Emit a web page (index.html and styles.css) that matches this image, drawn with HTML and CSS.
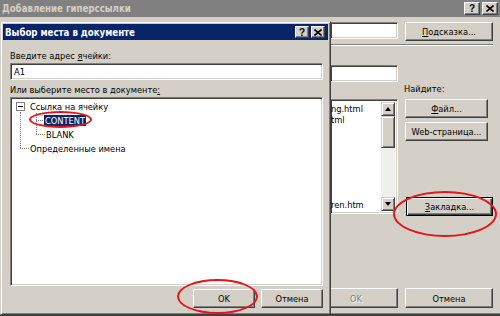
FILE: index.html
```html
<!doctype html>
<html>
    <head>
        <meta charset="utf-8">
        <title>Выбор места в документе</title>
        <link rel="stylesheet" href="styles.css">
    </head>
    <body>
        <div id="desktop">
            <!-- background window: Добавление гиперссылки -->
            <div class="back-window">
                <div class="titlebar inactive">
                    <span class="title">Добавление гиперссылки</span>
                    <span class="caption-buttons">
                        <span class="cap">?</span>
                        <span class="cap"><svg width="8" height="7" viewBox="0 0 8 7"><path d="M0.5 0.5 L7.5 6.5 M7.5 0.5 L0.5 6.5" stroke="#000" stroke-width="1.6"/></svg></span>
                    </span>
                </div>
                <div class="back-body">
                    <div class="row">
                        <div class="col-a"><div class="field"></div></div>
                        <div class="col-b"><div class="btn"><u>П</u>одсказка...</div></div>
                    </div>
                    <div class="separator"></div>
                    <div class="row grow">
                        <div class="col-a">
                            <div class="field second"></div>
                            <div class="listbox">
                                <div class="list-items">
                                    <div>ng.html</div>
                                    <div>tml</div>
                                    <div class="last">ren.htm</div>
                                </div>
                                <div class="scrollbar">
                                    <div class="sb-btn"><span class="arrow up"></span></div>
                                    <div class="sb-thumb"></div>
                                    <div class="sb-track"></div>
                                    <div class="sb-btn"><span class="arrow down"></span></div>
                                </div>
                            </div>
                        </div>
                        <div class="col-b">
                            <div class="find-label">Найдите:</div>
                            <div class="btn narrow file-btn"><u>Ф</u>айл...</div>
                            <div class="btn narrow web-btn">Web-страница...</div>
                            <div class="btn default bookmark-btn"><u>З</u>акладка...</div>
                        </div>
                    </div>
                    <div class="row bottom-row">
                        <div class="col-a"><div class="btn disabled back-ok">OK</div></div>
                        <div class="col-b"><div class="btn">Отмена</div></div>
                    </div>
                </div>
            </div>

            <!-- dialog: Выбор места в документе -->
            <div class="dialog">
                <div class="titlebar active">
                    <span class="title">Выбор места в документе</span>
                    <span class="caption-buttons small">
                        <span class="cap">?</span>
                        <span class="cap"><svg width="8" height="7" viewBox="0 0 8 7"><path d="M0.5 0.5 L7.5 6.5 M7.5 0.5 L0.5 6.5" stroke="#000" stroke-width="1.6"/></svg></span>
                    </span>
                </div>
                <div class="dialog-body">
                    <div class="label">Введите адрес <u>я</u>чейки:</div>
                    <div class="field address">A1</div>
                    <div class="label second">Или выберите место в документе<u>:</u></div>
                    <div class="tree">
                        <div class="tree-row">
                            <span class="cell root"><span class="expander"></span></span>
                            <span class="node">Ссылка на ячейку</span>
                        </div>
                        <div class="tree-row">
                            <span class="cell pipe"></span>
                            <span class="cell tee"></span>
                            <span class="node selected">CONTENT</span>
                        </div>
                        <div class="tree-row">
                            <span class="cell pipe"></span>
                            <span class="cell elbow"></span>
                            <span class="node">BLANK</span>
                        </div>
                        <div class="tree-row">
                            <span class="cell elbow"></span>
                            <span class="node">Определенные имена</span>
                        </div>
                    </div>
                    <div class="dialog-buttons">
                        <div class="btn">OK</div>
                        <div class="btn">Отмена</div>
                    </div>
                </div>
            </div>

            <!-- red marks drawn over the screenshot -->
            <div class="mark mark-content"></div>
            <div class="mark mark-bookmark"></div>
            <div class="mark mark-ok"></div>
        </div>
    </body>
</html>
```

FILE: styles.css
```css
html, body {
    margin: 0;
    padding: 0;
}
body {
    font-family: "DejaVu Sans Condensed", "DejaVu Sans", sans-serif;
    font-size: 9.2px;
    color: #000;
    background: #d4d0c8;
    --dv: repeating-linear-gradient(to bottom, #808080 0 1px, transparent 1px 2px);
    --dh: repeating-linear-gradient(to right, #808080 0 1px, transparent 1px 2px);
}
#desktop {
    position: relative;
    width: 500px;
    height: 316px;
    overflow: hidden;
}
u {
    text-decoration: underline;
    text-underline-offset: 1px;
}

/* title bars */
.titlebar {
    display: flex;
    align-items: center;
    justify-content: space-between;
    font-size: 9.6px;
    font-weight: bold;
    white-space: nowrap;
}
.titlebar.inactive {
    height: 17px;
    background: #808080;
    color: #d4d0c8;
    padding: 0 2px 0 2px;
}
.titlebar.active {
    height: 16px;
    background: #0a246a;
    color: #fff;
    padding: 0 3px 0 2px;
}
.caption-buttons {
    display: flex;
    gap: 2px;
}
.cap {
    width: 14px;
    height: 12px;
    box-sizing: border-box;
    display: flex;
    align-items: center;
    justify-content: center;
    background: #d4d0c8;
    color: #000;
    font-family: "Liberation Sans", Arial, sans-serif;
    font-size: 10px;
    font-weight: bold;
    border: 1px solid;
    border-color: #fff #404040 #404040 #fff;
    box-shadow: inset -1px -1px #808080;
}
.inactive .cap {
    width: 16px;
    height: 13px;
}

/* buttons and fields */
.btn {
    box-sizing: border-box;
    height: 19px;
    display: flex;
    align-items: center;
    justify-content: center;
    background: #d4d0c8;
    border: 1px solid;
    border-color: #fff #404040 #404040 #fff;
    box-shadow: inset -1px -1px #808080;
    white-space: nowrap;
}
.btn.default {
    border: 1px solid #000;
    box-shadow: inset 1px 1px #fff, inset -1px -1px #404040, inset -2px -2px #808080;
}
.btn.disabled {
    color: #808080;
    text-shadow: 1px 1px #fff;
}
.field {
    box-sizing: border-box;
    height: 17px;
    background: #fff;
    border: 1px solid;
    border-color: #808080 #fff #fff #808080;
    box-shadow: inset 1px 1px #404040, inset -1px -1px #d4d0c8;
}

/* background window */
.back-window {
    box-sizing: border-box;
    width: 500px;
    height: 316px;
    display: flex;
    flex-direction: column;
    border-bottom: 2px solid #404040;
    box-shadow: inset 0 -1px #808080;
}
.back-body {
    flex: 1;
    display: flex;
    flex-direction: column;
    padding: 5px 7px 6px 330px;
}
.row {
    display: flex;
    gap: 7px;
}
.row.grow {
    flex: 1;
}
.col-a {
    width: 68px;
    display: flex;
    flex-direction: column;
}
.col-b {
    width: 88px;
    display: flex;
    flex-direction: column;
}
.separator {
    margin-top: 3px;
    border-top: 1px solid #808080;
    border-bottom: 1px solid #fff;
}
.field.second {
    margin-top: 19px;
}
.listbox {
    box-sizing: border-box;
    margin-top: 17px;
    height: 115px;
    display: flex;
    background: #fff;
    border: 1px solid;
    border-color: #808080 #fff #fff #808080;
    box-shadow: inset 1px 1px #404040, inset -1px -1px #d4d0c8;
    padding: 2px 2px 2px 0;
}
.list-items {
    flex: 1;
    display: flex;
    flex-direction: column;
    line-height: 11px;
    overflow: hidden;
    padding: 1px 0 0 0;
}
.list-items .last {
    margin-top: auto;
    margin-bottom: 1px;
}
.scrollbar {
    width: 14px;
    display: flex;
    flex-direction: column;
}
.sb-btn, .sb-thumb {
    box-sizing: border-box;
    background: #d4d0c8;
    border: 1px solid;
    border-color: #d4d0c8 #404040 #404040 #d4d0c8;
    box-shadow: inset 1px 1px #fff, inset -1px -1px #808080;
}
.sb-btn {
    height: 14px;
    display: flex;
    align-items: center;
    justify-content: center;
}
.sb-thumb {
    height: 32px;
}
.sb-track {
    flex: 1;
    background: #f0efeb;
}
.arrow {
    width: 0;
    height: 0;
    border-left: 3px solid transparent;
    border-right: 3px solid transparent;
}
.arrow.up {
    border-bottom: 4px solid #000;
}
.arrow.down {
    border-top: 4px solid #000;
}
.find-label {
    margin-top: 36px;
    line-height: 13px;
    margin-left: -1px;
}
.btn.narrow {
    width: 83px;
}
.file-btn {
    margin-top: 4px;
}
.web-btn {
    margin-top: 4px;
}
.bookmark-btn {
    margin-top: 56px;
    margin-left: 1px;
    width: 87px;
}
.bottom-row .btn {
    height: 20px;
}
.back-ok {
    margin-left: -16px;
    width: 84px;
}

/* dialog */
.dialog {
    position: absolute;
    left: 0;
    top: 21px;
    width: 331px;
    height: 294px;
    box-sizing: border-box;
    display: flex;
    flex-direction: column;
    background: #d4d0c8;
    border: 1px solid;
    border-color: #d4d0c8 #404040 #404040 #d4d0c8;
    box-shadow: inset 1px 1px #fff, inset -1px -1px #808080;
    padding: 2px;
}
.dialog-body {
    flex: 1;
    display: flex;
    flex-direction: column;
    padding: 9px 5px 4px 7px;
}
.label {
    line-height: 13px;
}
.label.second {
    margin-top: 3px;
}
.field.address {
    margin-top: 1px;
    padding-left: 3px;
    line-height: 15px;
}
.tree {
    flex: 1;
    margin-top: 1px;
    box-sizing: border-box;
    background: #fff;
    border: 1px solid;
    border-color: #808080 #fff #fff #808080;
    box-shadow: inset 1px 1px #404040, inset -1px -1px #d4d0c8;
    padding: 1px 2px;
}
.tree-row {
    display: flex;
    align-items: center;
    height: 14px;
    white-space: nowrap;
}
.cell {
    flex: none;
    width: 16px;
    height: 14px;
}
.cell.root {
    display: flex;
    align-items: center;
    background: var(--dv) 7px 11px / 1px 3px no-repeat;
}
.expander {
    box-sizing: border-box;
    width: 9px;
    height: 9px;
    margin-left: 3px;
    background: #fff linear-gradient(#000, #000) center / 5px 1px no-repeat;
    border: 1px solid #808080;
}
.cell.pipe {
    background: var(--dv) 7px 0 / 1px 14px no-repeat;
}
.cell.tee {
    background: var(--dv) 7px 0 / 1px 14px no-repeat, var(--dh) 7px 7px / 9px 1px no-repeat;
}
.cell.elbow {
    background: var(--dv) 7px 0 / 1px 8px no-repeat, var(--dh) 7px 7px / 9px 1px no-repeat;
}
.node {
    line-height: 11px;
    padding: 0 1px;
}
.node.selected {
    margin-left: -1px;
    padding: 0 1px;
    background: #0a246a;
    color: #fff;
}
.dialog-buttons {
    display: flex;
    justify-content: flex-end;
    gap: 6px;
    margin-top: 3px;
}
.dialog-buttons .btn {
    width: 62px;
}

/* red ellipses */
.mark {
    position: absolute;
    box-sizing: border-box;
    border: 2px solid #e3161d;
    border-radius: 50%;
}
.mark-content {
    left: 29px;
    top: 111px;
    width: 63px;
    height: 17px;
}
.mark-bookmark {
    left: 393px;
    top: 191px;
    width: 104px;
    height: 46px;
}
.mark-ok {
    left: 177px;
    top: 279px;
    width: 81px;
    height: 35px;
}
```
